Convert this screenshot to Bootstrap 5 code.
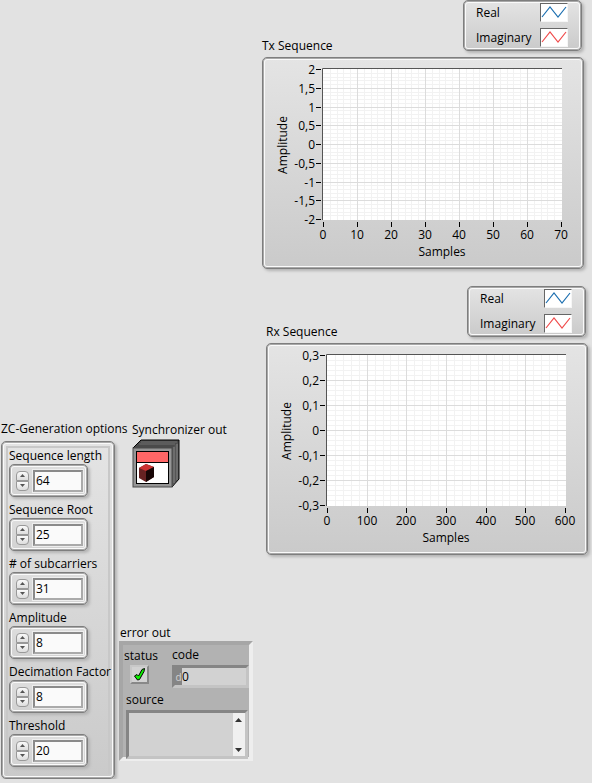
<!DOCTYPE html>
<html lang="en">
<head>
<meta charset="utf-8">
<meta name="viewport" content="width=device-width, initial-scale=1">
<title>ZC Synchronizer</title>
<link href="https://cdn.jsdelivr.net/npm/bootstrap@5.3.0/dist/css/bootstrap.min.css" rel="stylesheet">
<style>
body{background:#e2e2e2;color:#000;font-family:"Open Sans","Noto Sans",sans-serif;font-size:12px;line-height:16px}
label,.caption{display:block;white-space:nowrap;font-size:12px;font-weight:400;line-height:16px;margin:0}
.options-col{width:118px;padding-top:421px;padding-left:1px}
.status-col{width:144px;padding-top:422px}
.sync-title{padding-left:14px}
.sync-icon{display:block;margin:1px 0 0 14px}
.error-title{margin-top:136px;padding-left:2px}
.panel{border:1px solid #7e7e7e;border-radius:5px;padding:1px;background:linear-gradient(#e4e4e4,#cacaca);box-shadow:inset 0 0 0 1px #a8a8a8,inset 0 0 0 2px #fafafa,2px 2px 3px #b4b4b4}
.options{width:114px;margin-top:4px;padding:4px}
.options-frame{border:2px solid #c8c8c8;border-bottom-width:0;padding:0 0 2px 1px}
.field-block{height:54px}
.numeric{width:79px;height:33px;padding:3px 4px 3px 6px;background:linear-gradient(#dedede,#d2d2d2)}
.spin{width:13px;height:10px;padding:0;border:1px solid #999;background:linear-gradient(#fafafa,#ddd);line-height:0;display:flex;align-items:center;justify-content:center}
.spin:first-child{border-radius:4px 4px 0 0}
.spin:last-child{border-radius:0 0 4px 4px}
.numeric input{width:50px;height:22px;border:2px solid #8a8a8a;border-right-color:#aaa;border-bottom-color:#aaa;background:#fafafa;padding:0 1px;font-size:12px;line-height:16px;border-radius:0;color:#000;outline:1px solid #eee}
.error-box{width:134px;height:120px;margin-left:1px;border:4px solid #a6a6a6;border-right-color:#eee;border-bottom-color:#eee;background:#b2b2b2;padding:2px 0 0 1px}
.led-group{width:48px;padding-top:1px}
.led{width:19px;height:19px;margin:1px 0 0 6px;padding:0;border:2px solid #c8c8c8;border-right-color:#888;border-bottom-color:#888;background:#d2d2d2;display:flex;align-items:center;justify-content:center}
.code-group label{margin-bottom:2px}
.sunken{border:3px solid #858585;border-right-color:#c4c4c4;border-bottom-color:#c4c4c4;background:#d2d2d2}
.code-field{width:77px;height:23px}
.radix{background:#858585;color:#d2d2d2;border:0;padding:0;width:7px;line-height:16px;font-size:10px}
.code-field input{background:transparent;border:0;padding:0;width:60px;color:#000;font-size:12px}
.source-label{margin:4px 0 2px 2px}
.source-field{width:122px;height:49px;margin-left:2px}
.source-field textarea{background:transparent;border:0;resize:none;padding:0;min-width:0}
.scroll-strip{width:18px;background:#f0f0f0}
.scroll-strip button{border:0;background:transparent;padding:0;height:13px;line-height:0}
.charts{padding-right:8px}
.legend-panel{width:119px;height:51px;margin-right:2px;padding:0 13px 0 12px}
.legend-row{height:25px;padding-bottom:2px}
.swatch{display:block;background:#fff;border:1px solid #f6f6f6;border-top-color:#666;border-left-color:#666}
.plot-title{margin-top:-13px}
.chart-rx{padding-left:4px;margin-top:17px;margin-right:-4px}
.plot-panel{margin-top:3px}
.plot-panel svg{display:block;width:100%;height:auto}
</style>
<script src="https://cdn.jsdelivr.net/npm/bootstrap@5.3.0/dist/js/bootstrap.bundle.min.js"></script>
</head>
<body>
<main class="d-flex">
  <section class="options-col flex-shrink-0">
    <h2 class="caption" id="optTitle">ZC-Generation options</h2>
    <form class="panel options" aria-labelledby="optTitle">
      <div class="options-frame" id="fields"></div>
    </form>
  </section>

  <section class="status-col flex-shrink-0">
    <h2 class="caption sync-title">Synchronizer out</h2>
    <svg class="sync-icon" width="50" height="50" viewBox="0 0 50 50" role="img" aria-label="Synchronizer object">
      <path d="M1 9L9 1H47V40L39 48H1Z" fill="#4b4b4b"/>
      <path d="M2 8L9 1H47L40 8Z" fill="#4a4a4a"/>
      <path d="M7 5H43M9 3H45" stroke="#6e6e6e"/>
      <path d="M40 9L47 2V40L40 47Z" fill="#555"/>
      <path d="M42 8V44M45 5V41" stroke="#858585"/>
      <path d="M1 9L9 1H47V40L40 48" fill="none" stroke="#000"/>
      <rect x="1" y="9" width="39" height="39" fill="#969696" stroke="#4a4a4a"/>
      <rect x="4.500" y="12.500" width="32" height="32" fill="#fff" stroke="#000"/>
      <rect x="5" y="13" width="31" height="10" fill="#ff6666"/>
      <path d="M5 23.500H36" stroke="#000"/>
      <path d="M7 29L14 25L22 28V38L14 43L7 39Z" fill="#662222"/>
      <path d="M7 29L14 25L22 28L14 32Z" fill="#cc3333"/>
      <path d="M14 32L22 28V38L14 43Z" fill="#170606"/>
    </svg>
    <h2 class="caption error-title">error out</h2>
    <div class="error-box">
      <div class="d-flex">
        <div class="led-group">
          <div class="caption" id="ledLabel">status</div>
          <button class="led" type="button" aria-labelledby="ledLabel">
            <svg width="13" height="15" viewBox="0 0 13 15"><path d="M1.500 9L4 7.500L5.500 9L9 2.500L11.500 1.500L11 4.500L6.500 12.500L4.500 13Z" fill="#0cf000" stroke="#000"/></svg>
          </button>
        </div>
        <div class="code-group">
          <label for="code">code</label>
          <div class="sunken code-field d-flex"><button class="radix" type="button" aria-label="Radix decimal">d</button><input id="code" value="0" readonly></div>
        </div>
      </div>
      <label for="source" class="source-label">source</label>
      <div class="sunken source-field d-flex">
        <textarea class="flex-grow-1" id="source" readonly></textarea>
        <div class="scroll-strip d-flex flex-column justify-content-between">
          <button type="button" aria-label="Scroll up"><svg width="7" height="4" viewBox="0 0 7 4"><path d="M0 4L3.500 0L7 4Z" fill="#333"/></svg></button>
          <button type="button" aria-label="Scroll down"><svg width="7" height="4" viewBox="0 0 7 4"><path d="M0 0L3.500 4L7 0Z" fill="#333"/></svg></button>
        </div>
      </div>
    </div>
  </section>

  <section class="charts flex-grow-1">
    <article class="chart-tx">
      <div class="panel legend-panel ms-auto"></div>
      <h2 class="caption plot-title">Tx Sequence</h2>
      <div class="panel plot-panel" data-chart="tx"></div>
    </article>
    <article class="chart-rx">
      <div class="panel legend-panel ms-auto"></div>
      <h2 class="caption plot-title">Rx Sequence</h2>
      <div class="panel plot-panel" data-chart="rx"></div>
    </article>
  </section>
</main>
<script>
const up='<svg width="5" height="3" viewBox="0 0 5 3"><path d="M0 3L2.500 0L5 3Z" fill="#555"/></svg>';
const down='<svg width="5" height="3" viewBox="0 0 5 3"><path d="M0 0L2.500 3L5 0Z" fill="#555"/></svg>';
document.getElementById('fields').innerHTML=[['Sequence length',64],['Sequence Root',25],['# of subcarriers',31],['Amplitude',8],['Decimation Factor',8],['Threshold',20]]
 .map(([n,v],i)=>`<div class="field-block"><label for="f${i}">${n}</label><div class="panel numeric d-flex align-items-center justify-content-between"><div><button class="spin" type="button" aria-label="Increase ${n}">${up}</button><button class="spin" type="button" aria-label="Decrease ${n}">${down}</button></div><input id="f${i}" inputmode="numeric" value="${v}"></div></div>`).join('');

document.querySelectorAll('.legend-panel').forEach(p=>{
  p.innerHTML=[['Real','#1c6fb0'],['Imaginary','#f04a4a']].map(([n,c])=>`<div class="legend-row d-flex justify-content-between align-items-center"><span>${n}</span><svg class="swatch" width="28" height="19" viewBox="0 0 26 17"><path d="M1 13L9 3L17 13L25 3" fill="none" stroke="${c}" stroke-width="1.200"/></svg></div>`).join('');
});

const axes={
  tx:{x:['0','10','20','30','40','50','60','70'],y:['2','1,5','1','0,5','0','-0,5','-1','-1,5','-2']},
  rx:{x:['0','100','200','300','400','500','600'],y:['0,3','0,2','0,1','0','-0,1','-0,2','-0,3']}
};
document.querySelectorAll('[data-chart]').forEach(p=>{
  const a=axes[p.dataset.chart],L=59,T=10,W=238,H=150;
  const nx=(a.x.length-1)*5,ny=(a.y.length-1)*5;
  const px=i=>L+Math.round(W*i/nx),py=i=>T+Math.round(H*i/ny);
  let minor='',major='',ticks='',text='';
  for(let i=1;i<nx;i++){const d=`M${px(i)+.5} 10V161`;i%5?minor+=d:major+=d}
  for(let i=1;i<ny;i++){const d=`M59 ${py(i)+.5}H298`;i%5?minor+=d:major+=d}
  a.x.forEach((t,i)=>{const x=px(i*5);ticks+=`M${x+.5} 163V168`;text+=`<text x="${x}" y="180" text-anchor="middle">${t}</text>`});
  a.y.forEach((t,i)=>{const y=py(i*5);ticks+=`M52 ${y+.5}H57`;text+=`<text x="51" y="${y+5}" text-anchor="end">${t}</text>`});
  p.innerHTML=`<svg viewBox="0 0 318 208" font-size="12"><rect x="58" y="9" width="240" height="152" fill="#fff"/><path d="${minor}" stroke="#f2f2f2"/><path d="${major}" stroke="#dcdcdc"/><path d="M58.500 161V9.500H298" fill="none" stroke="#555"/><path d="${ticks}" stroke="#000"/>${text}<text x="178" y="197" text-anchor="middle">Samples</text><text transform="translate(23 86) rotate(-90)" text-anchor="middle">Amplitude</text></svg>`;
});
</script>
</body>
</html>
